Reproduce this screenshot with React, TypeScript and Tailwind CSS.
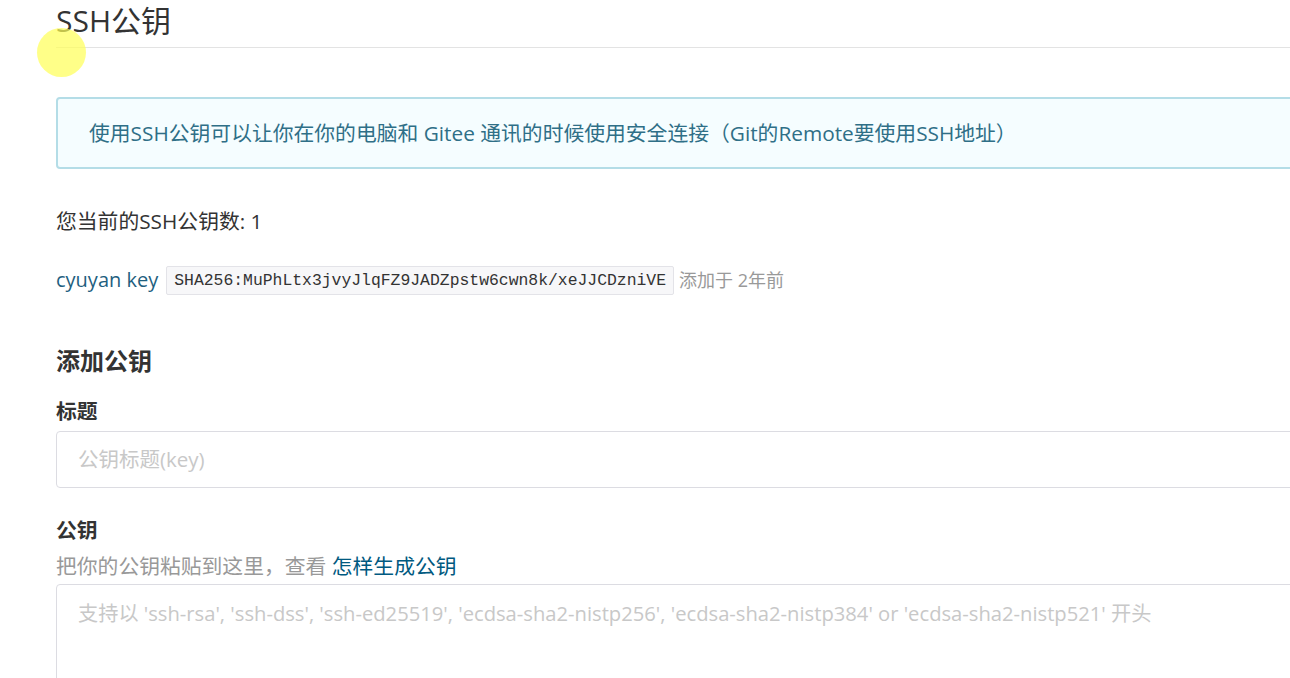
export default function App() {
  return (
    <div className="relative h-[678px] w-[1290px] overflow-hidden bg-white font-['Open_Sans','Noto_Sans_CJK_SC',sans-serif] text-[#333]">
      <div className="w-[1300px] pl-[56px] pt-[2px]">
        <h2 className="border-b border-[#e3e3e3] pb-[7px] text-[30px] leading-[38px] text-[#333]">SSH公钥</h2>

        <div className="mt-[49px] rounded-[4px] border-2 border-[#b4dde7] bg-[#f5fdff] py-[20px] pl-[31px] text-[20.8px] leading-[28px] text-[#2f6f87]">
          使用SSH公钥可以让你在你的电脑和 Gitee 通讯的时候使用安全连接（Git的Remote要使用SSH地址）
        </div>

        <p className="mt-[38px] text-[20.8px] leading-[28px]">您当前的SSH公钥数: 1</p>

        <div className="mt-[30px] flex items-center text-[20px]">
          <span className="text-[#1f5f7f]">cyuyan key</span>
          <code className="ml-[8px] rounded-[2px] border border-[#e3e3e8] bg-[#f7f7f9] px-[7px] py-[2px] font-['Liberation_Mono',monospace] text-[16.4px] leading-[23px] text-[#333]">
            SHA256:MuPhLtx3jvyJlqFZ9JADZpstw6cwn8k/xeJJCDzniVE
          </code>
          <span className="ml-[5px] text-[18px] text-[#999]">添加于 2年前</span>
        </div>

        <h3 className="mt-[50px] text-[24px] font-bold leading-[32px] text-[#333]">添加公钥</h3>

        <label className="mt-[22px] block text-[20.8px] font-bold leading-[24px]">标题</label>
        <div className="mt-[8px] h-[57px] rounded-[4px] border border-[#dcdce2] pl-[21px] text-[20.5px] leading-[55px] text-[#c8c8c8]">
          公钥标题(key)
        </div>

        <label className="mt-[30px] block text-[20.8px] font-bold leading-[24px]">公钥</label>
        <p className="mt-[10px] text-[20.8px] leading-[28px] text-[#999]">
          把你的公钥粘贴到这里，查看 <span className="text-[#005980]">怎样生成公钥</span>
        </p>
        <div className="mt-[4px] h-[140px] rounded-[4px] border border-[#dcdce2] pl-[21px] pt-[14px] text-[20.2px] leading-[28px] text-[#c8c8c8]">
          支持以 'ssh-rsa', 'ssh-dss', 'ssh-ed25519', 'ecdsa-sha2-nistp256', 'ecdsa-sha2-nistp384' or 'ecdsa-sha2-nistp521' 开头
        </div>
      </div>

      <div className="pointer-events-none absolute left-[37px] top-[28px] h-[49px] w-[49px] rounded-full bg-[#ffff55]/70" />
    </div>
  );
}
